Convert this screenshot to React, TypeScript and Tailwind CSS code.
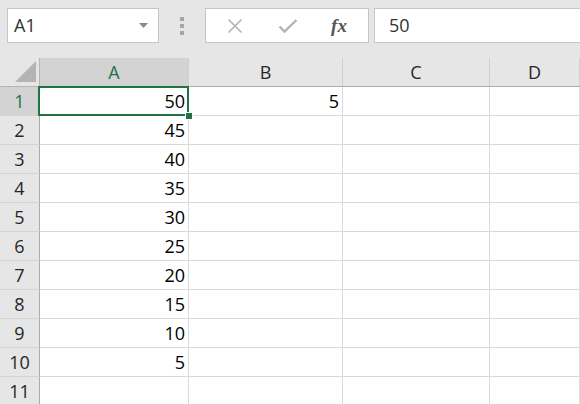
import React from 'react';

const cols = [
  { id: 'A', w: 'w-[149px]' },
  { id: 'B', w: 'w-[154px]' },
  { id: 'C', w: 'w-[147px]' },
  { id: 'D', w: 'flex-1' },
];

const data: Record<number, Record<string, string>> = {
  1: { A: '50', B: '5' },
  2: { A: '45' },
  3: { A: '40' },
  4: { A: '35' },
  5: { A: '30' },
  6: { A: '25' },
  7: { A: '20' },
  8: { A: '15' },
  9: { A: '10' },
  10: { A: '5' },
};

const rows = [1, 2, 3, 4, 5, 6, 7, 8, 9, 10, 11];

function Toolbar() {
  return (
    <div className="h-[58px] bg-[#e6e6e6] flex items-start pt-[8px] pl-[7px] shrink-0">
      <div className="w-[152px] h-[35px] bg-white border border-[#c6c6c6] flex items-center justify-between pl-[6px] pr-[10px]">
        <span className="text-[18px] text-[#333]">A1</span>
        <svg width="9" height="5" viewBox="0 0 9 5">
          <path d="M0 0h9L4.5 5z" fill="#8a8a8a" />
        </svg>
      </div>
      <div className="w-[46px] h-[35px] flex flex-col items-center justify-center gap-[3px]">
        <div className="w-[4px] h-[4px] bg-[#a6a6a6]" />
        <div className="w-[4px] h-[4px] bg-[#a6a6a6]" />
        <div className="w-[4px] h-[4px] bg-[#a6a6a6]" />
      </div>
      <div className="w-[164px] h-[35px] bg-white border border-[#c6c6c6] flex items-center">
        <div className="w-[56px] flex justify-center pl-[2px]">
          <svg width="16" height="16" viewBox="0 0 16 16">
            <path d="M1.5 1.5l13 13M14.5 1.5l-13 13" stroke="#b3b3b3" strokeWidth="1.6" />
          </svg>
        </div>
        <div className="w-[52px] flex justify-center">
          <svg width="20" height="16" viewBox="0 0 20 16">
            <path d="M1.5 8.5l5 5L18.5 2" stroke="#b3b3b3" strokeWidth="2.4" fill="none" />
          </svg>
        </div>
        <div className="flex-1 flex justify-center pr-[4px]">
          <span
            className="italic font-bold text-[19px] text-[#555] leading-none"
            style={{ fontFamily: '"Liberation Serif", serif' }}
          >
            fx
          </span>
        </div>
      </div>
      <div className="ml-[5px] flex-1 h-[35px] bg-white border border-[#c6c6c6] border-r-0 flex items-center pl-[14px]">
        <span className="text-[18px] text-[#333]">50</span>
      </div>
    </div>
  );
}

function HeaderRow() {
  return (
    <div className="flex h-[29px] shrink-0">
      <div className="w-[40px] bg-[#e6e6e6] border-r border-b border-[#b5b5b5] relative">
        <svg className="absolute left-[15px] top-[3px]" width="21" height="21" viewBox="0 0 21 21">
          <path d="M21 0V21H0z" fill="#b4b4b4" />
        </svg>
      </div>
      {cols.map(c => (
        <div
          key={c.id}
          className={`${c.w} border-r border-[#cfcfcf] border-b border-b-[#ababab] flex items-center justify-center text-[18px] ${
            c.id === 'A' ? 'bg-[#d3d3d3] text-[#217346]' : 'bg-[#e6e6e6] text-[#262626]'
          }`}
        >
          {c.id}
        </div>
      ))}
    </div>
  );
}

export default function App() {
  return (
    <div
      className="w-[580px] h-[404px] overflow-hidden bg-white flex flex-col"
      style={{ fontFamily: '"Open Sans", "Noto Sans", sans-serif' }}
    >
      <Toolbar />
      <HeaderRow />
      {rows.map(r => (
        <div key={r} className="flex h-[29px] shrink-0">
          <div
            className={`w-[40px] border-r border-[#ababab] border-b border-b-[#d4d4d4] flex items-center justify-center text-[18px] ${
              r === 1 ? 'bg-[#d3d3d3] text-[#217346]' : 'bg-[#e6e6e6] text-[#262626]'
            }`}
          >
            {r}
          </div>
          {cols.map(c => (
            <div
              key={c.id}
              className={`${c.w} relative border-r border-b border-[#d9d9d9] flex items-center justify-end pr-[3px] text-[18px] text-black ${
                r === 1 && c.id === 'A' ? 'z-10' : ''
              }`}
            >
              {data[r]?.[c.id] ?? ''}
              {r === 1 && c.id === 'A' && (
                <>
                  <div className="absolute left-[-2px] top-[-1px] right-[-1px] bottom-[-1px] border-2 border-[#217346] pointer-events-none" />
                  <div className="absolute right-[-5px] bottom-[-5px] w-[8px] h-[8px] bg-[#217346] border border-white" />
                </>
              )}
            </div>
          ))}
        </div>
      ))}
    </div>
  );
}
